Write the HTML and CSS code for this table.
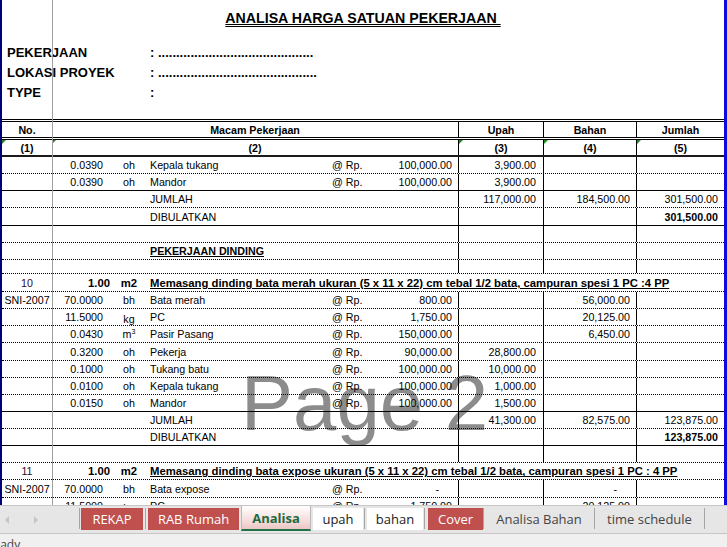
FILE: index.html
```html
<!DOCTYPE html>
<html>
<head>
<meta charset="utf-8">
<link rel="stylesheet" href="styles.css">
</head>
<body>
<div class="app">
  <div class="sheet">
    <div class="watermark">Page 2</div>
    <div class="pagebreak"></div>

    <h1 class="title"><span>ANALISA HARGA SATUAN PEKERJAAN&nbsp;</span></h1>

    <div class="info">
      <div class="info-row"><span class="label">PEKERJAAN</span><span class="val">: ...........................................</span></div>
      <div class="info-row"><span class="label">LOKASI PROYEK</span><span class="val">: ............................................</span></div>
      <div class="info-row"><span class="label">TYPE</span><span class="val">:</span></div>
    </div>

    <div class="thead">
      <div class="hrow hrow1">
        <div class="h">No.</div>
        <div class="h">Macam Pekerjaan</div>
        <div class="h vl">Upah</div>
        <div class="h vl">Bahan</div>
        <div class="h vl">Jumlah</div>
      </div>
      <div class="hrow hrow2">
        <div class="h tri">(1)</div>
        <div class="h tri">(2)</div>
        <div class="h vl tri">(3)</div>
        <div class="h vl tri">(4)</div>
        <div class="h vl tri">(5)</div>
      </div>
    </div>

    <div class="tbody">
      <div class="row">
        <div class="c no"></div><div class="c coef">0.0390</div><div class="c unit">oh</div><div class="c desc">Kepala tukang</div><div class="c at">@ Rp.</div><div class="c price">100,000.00</div><div class="c up">3,900.00</div><div class="c bh"></div><div class="c jm"></div>
      </div>
      <div class="row solid">
        <div class="c no"></div><div class="c coef">0.0390</div><div class="c unit">oh</div><div class="c desc">Mandor</div><div class="c at">@ Rp.</div><div class="c price">100,000.00</div><div class="c up">3,900.00</div><div class="c bh"></div><div class="c jm"></div>
      </div>
      <div class="row">
        <div class="c no"></div><div class="c coef"></div><div class="c unit"></div><div class="c desc">JUMLAH</div><div class="c at"></div><div class="c price"></div><div class="c up">117,000.00</div><div class="c bh">184,500.00</div><div class="c jm">301,500.00</div>
      </div>
      <div class="row solid">
        <div class="c no"></div><div class="c coef"></div><div class="c unit"></div><div class="c desc">DIBULATKAN</div><div class="c at"></div><div class="c price"></div><div class="c up"></div><div class="c bh"></div><div class="c jm bold">301,500.00</div>
      </div>
      <div class="row">
        <div class="c no"></div><div class="c coef"></div><div class="c unit"></div><div class="c desc"></div><div class="c at"></div><div class="c price"></div><div class="c up"></div><div class="c bh"></div><div class="c jm"></div>
      </div>
      <div class="row">
        <div class="c no"></div><div class="c coef"></div><div class="c unit"></div><div class="c desc bold ul">PEKERJAAN DINDING</div><div class="c at"></div><div class="c price"></div><div class="c up"></div><div class="c bh"></div><div class="c jm"></div>
      </div>
      <div class="row short">
        <div class="c no"></div><div class="c coef"></div><div class="c unit"></div><div class="c desc"></div><div class="c at"></div><div class="c price"></div><div class="c up"></div><div class="c bh"></div><div class="c jm"></div>
      </div>
      <div class="row tall">
        <div class="c no num">10</div><div class="c coef bold one">1.00</div><div class="c unit bold big">m2</div><div class="c desc merged bold ul big">Memasang dinding bata merah ukuran (5 x 11 x 22) cm tebal 1/2 bata, campuran spesi 1 PC :4 PP</div>
      </div>
      <div class="row">
        <div class="c no">SNI-2007</div><div class="c coef">70.0000</div><div class="c unit">bh</div><div class="c desc">Bata merah</div><div class="c at">@ Rp.</div><div class="c price">800.00</div><div class="c up"></div><div class="c bh">56,000.00</div><div class="c jm"></div>
      </div>
      <div class="row">
        <div class="c no"></div><div class="c coef">11.5000</div><div class="c unit low">kg</div><div class="c desc">PC</div><div class="c at">@ Rp.</div><div class="c price">1,750.00</div><div class="c up"></div><div class="c bh">20,125.00</div><div class="c jm"></div>
      </div>
      <div class="row">
        <div class="c no"></div><div class="c coef">0.0430</div><div class="c unit"><span>m<sup>3</sup></span></div><div class="c desc">Pasir Pasang</div><div class="c at">@ Rp.</div><div class="c price">150,000.00</div><div class="c up"></div><div class="c bh">6,450.00</div><div class="c jm"></div>
      </div>
      <div class="row">
        <div class="c no"></div><div class="c coef">0.3200</div><div class="c unit">oh</div><div class="c desc">Pekerja</div><div class="c at">@ Rp.</div><div class="c price">90,000.00</div><div class="c up">28,800.00</div><div class="c bh"></div><div class="c jm"></div>
      </div>
      <div class="row">
        <div class="c no"></div><div class="c coef">0.1000</div><div class="c unit">oh</div><div class="c desc">Tukang batu</div><div class="c at">@ Rp.</div><div class="c price">100,000.00</div><div class="c up">10,000.00</div><div class="c bh"></div><div class="c jm"></div>
      </div>
      <div class="row">
        <div class="c no"></div><div class="c coef">0.0100</div><div class="c unit">oh</div><div class="c desc">Kepala tukang</div><div class="c at">@ Rp.</div><div class="c price">100,000.00</div><div class="c up">1,000.00</div><div class="c bh"></div><div class="c jm"></div>
      </div>
      <div class="row solid">
        <div class="c no"></div><div class="c coef">0.0150</div><div class="c unit">oh</div><div class="c desc">Mandor</div><div class="c at">@ Rp.</div><div class="c price">100,000.00</div><div class="c up">1,500.00</div><div class="c bh"></div><div class="c jm"></div>
      </div>
      <div class="row">
        <div class="c no"></div><div class="c coef"></div><div class="c unit"></div><div class="c desc">JUMLAH</div><div class="c at"></div><div class="c price"></div><div class="c up">41,300.00</div><div class="c bh">82,575.00</div><div class="c jm">123,875.00</div>
      </div>
      <div class="row solid">
        <div class="c no"></div><div class="c coef"></div><div class="c unit"></div><div class="c desc">DIBULATKAN</div><div class="c at"></div><div class="c price"></div><div class="c up"></div><div class="c bh"></div><div class="c jm bold">123,875.00</div>
      </div>
      <div class="row">
        <div class="c no"></div><div class="c coef"></div><div class="c unit"></div><div class="c desc"></div><div class="c at"></div><div class="c price"></div><div class="c up"></div><div class="c bh"></div><div class="c jm"></div>
      </div>
      <div class="row">
        <div class="c no num">11</div><div class="c coef bold one">1.00</div><div class="c unit bold big">m2</div><div class="c desc merged bold ul big">Memasang dinding bata expose ukuran (5 x 11 x 22) cm tebal 1/2 bata, campuran spesi 1 PC : 4 PP</div>
      </div>
      <div class="row">
        <div class="c no">SNI-2007</div><div class="c coef">70.0000</div><div class="c unit">bh</div><div class="c desc">Bata expose</div><div class="c at">@ Rp.</div><div class="c price dash">-</div><div class="c up"></div><div class="c bh dash">-</div><div class="c jm"></div>
      </div>
      <div class="row">
        <div class="c no"></div><div class="c coef">11.5000</div><div class="c unit low">kg</div><div class="c desc">PC</div><div class="c at">@ Rp.</div><div class="c price">1,750.00</div><div class="c up"></div><div class="c bh">20,125.00</div><div class="c jm"></div>
      </div>
    </div>
  </div>

  <div class="tabbar">
    <div class="nav">
      <span class="arrow left"></span>
      <span class="arrow right"></span>
    </div>
    <span class="sep"></span>
    <div class="tab red w-rekap">REKAP</div>
    <span class="sep"></span>
    <div class="tab red w-rab">RAB Rumah</div>
    <div class="tab active w-analisa">Analisa</div>
    <div class="tab white w-upah">upah</div>
    <span class="sep"></span>
    <div class="tab white w-bahan">bahan</div>
    <span class="sep"></span>
    <div class="tab red w-cover">Cover</div>
    <span class="sep"></span>
    <div class="tab plain w-ab">Analisa Bahan</div>
    <span class="sep"></span>
    <div class="tab plain w-ts">time schedule</div>
    <span class="sep"></span>
  </div>
  <div class="status">Ready</div>
</div>
</body>
</html>
```

FILE: styles.css
```css
html, body {
  margin: 0;
  padding: 0;
}

body {
  width: 727px;
  height: 547px;
  overflow: hidden;
  background: #ffffff;
  font-family: "Liberation Sans", Arial, sans-serif;
  color: #000;
}

.app {
  width: 727px;
  height: 547px;
  display: flex;
  flex-direction: column;
}

.sheet {
  position: relative;
  height: 505px;
  flex: none;
  box-sizing: border-box;
  border-left: 2px solid #00007a;
  border-right: 3px solid #0b0be0;
  overflow: hidden;
}

.watermark {
  position: absolute;
  left: 239px;
  top: 364px;
  font-size: 78px;
  line-height: 1;
  color: #8c8c8c;
  white-space: nowrap;
  z-index: 0;
}

.pagebreak {
  position: absolute;
  left: 50px;
  top: 0;
  bottom: 0;
  width: 1px;
  background: #9e9e9e;
  z-index: 5;
}

.title {
  position: relative;
  z-index: 1;
  margin: 0;
  height: 42px;
  box-sizing: border-box;
  padding-top: 9px;
  text-align: center;
  font-size: 14.2px;
  line-height: 18px;
  font-weight: bold;
}

.title span {
  text-decoration: underline double;
  text-decoration-thickness: 1px;
}

.info {
  position: relative;
  z-index: 1;
  height: 77px;
  font-size: 13px;
  font-weight: bold;
}

.info-row {
  display: flex;
  align-items: center;
  height: 20px;
}

.label {
  width: 143px;
  padding-left: 5px;
  white-space: nowrap;
}

.val {
  white-space: nowrap;
}

.thead {
  position: relative;
  z-index: 1;
  border-top: 3px double #000;
  font-size: 10.7px;
  font-weight: bold;
}

.hrow {
  display: grid;
  grid-template-columns: 50px 406px 85px 93px 88px;
  height: 15px;
}

.hrow1 {
  height: 18px;
  box-sizing: border-box;
  border-bottom: 3px double #000;
}

.hrow2 {
  height: 17px;
  box-sizing: border-box;
  border-bottom: 2px solid #1a1a1a;
}

.h {
  position: relative;
  display: flex;
  align-items: center;
  justify-content: center;
  line-height: 12px;
  padding-top: 1px;
}

.vl {
  border-left: 1px solid #000;
}

.tri::before {
  content: "";
  position: absolute;
  left: 0;
  top: 0;
  border-top: 4px solid #1f8a1f;
  border-right: 4px solid transparent;
}

.tbody {
  position: relative;
  z-index: 1;
  font-size: 10.7px;
}

.row {
  display: grid;
  grid-template-columns: 50px 60px 34px 184px 50px 78px 85px 93px 88px;
  height: 17.15px;
  box-sizing: border-box;
  border-bottom: 1px dotted #000;
}

.row.solid {
  border-bottom: 1px solid #000;
}

.row.short {
  height: 13.8px;
}

.row.tall {
  height: 18.3px;
}

.c {
  display: flex;
  align-items: flex-end;
  line-height: 12px;
  padding-bottom: 2px;
  white-space: nowrap;
  min-width: 0;
}

.no {
  justify-content: center;
}

.num {
  color: #2e0a2a;
}

.coef {
  justify-content: flex-end;
  padding-right: 9px;
}

.coef.one {
  padding-right: 2px;
  font-size: 11.3px;
}

.unit {
  justify-content: center;
}

.unit.low {
  padding-bottom: 0;
}

.unit sup {
  font-size: 7px;
  line-height: 0;
  vertical-align: 4px;
}

.desc {
  padding-left: 4px;
}

.desc.merged {
  grid-column: 4 / 10;
}

.at {
  padding-left: 2px;
}

.price {
  justify-content: flex-end;
  padding-right: 6px;
}

.up, .bh, .jm {
  justify-content: flex-end;
  border-left: 1px solid #000;
}

.up {
  padding-right: 7px;
}

.bh {
  padding-right: 6px;
}

.jm {
  padding-right: 6px;
}

.dash {
  padding-right: 19px;
}

.bold {
  font-weight: bold;
}

.ul {
  text-decoration: underline;
}

.big {
  font-size: 11.3px;
}

/* Sheet tabs */
.tabbar {
  flex: none;
  height: 29px;
  box-sizing: border-box;
  border-top: 1px solid #c6c6c6;
  border-bottom: 1px solid #c6c6c6;
  background: #e6e6e6;
  display: flex;
  align-items: flex-start;
  font-family: "Open Sans", "Noto Sans", sans-serif;
  font-size: 13px;
}

.nav {
  width: 79px;
  height: 27px;
  position: relative;
}

.arrow {
  position: absolute;
  top: 10px;
  width: 0;
  height: 0;
  border-top: 4px solid transparent;
  border-bottom: 4px solid transparent;
}

.arrow.left {
  left: 5px;
  border-right: 4px solid #c4c4c4;
}

.arrow.right {
  left: 34px;
  border-left: 4px solid #c4c4c4;
}

.sep {
  width: 1px;
  height: 21px;
  margin-top: 2px;
  background: #a6a6a6;
  flex: none;
}

.tab {
  height: 22px;
  margin-top: 2px;
  display: flex;
  align-items: center;
  justify-content: center;
  box-sizing: border-box;
  white-space: nowrap;
  flex: none;
}

.tab.red {
  background: #c0504d;
  color: #ffffff;
}

.tab.white {
  background: #ffffff;
  color: #1a1a1a;
}

.tab.plain {
  color: #444444;
}

.tab.active {
  height: 25px;
  margin-top: 0;
  background: linear-gradient(#ffffff, #f4d9d8 70%, #eac6c4);
  border-left: 1px solid #b8b8b8;
  border-right: 1px solid #b8b8b8;
  border-bottom: 2px solid #217346;
  color: #1f6b3d;
  font-weight: bold;
}

.w-rekap { width: 62px; margin-left: 1px; margin-right: 2px; }
.w-rab { width: 91px; margin-left: 2px; margin-right: 2px; }
.w-analisa { width: 70px; margin-right: 2px; }
.w-upah { width: 50px; margin-right: 1px; }
.w-bahan { width: 56px; margin-left: 2px; margin-right: 1px; }
.w-cover { width: 55px; margin-left: 3px; }
.w-ab { width: 110px; }
.w-ts { width: 109px; }

.status {
  flex: 1;
  background: #f0f0f0;
  font-family: "Open Sans", "Noto Sans", sans-serif;
  font-size: 12px;
  line-height: 14px;
  padding-top: 4px;
  text-indent: -14px;
  color: #444;
  white-space: nowrap;
  overflow: hidden;
}
```
